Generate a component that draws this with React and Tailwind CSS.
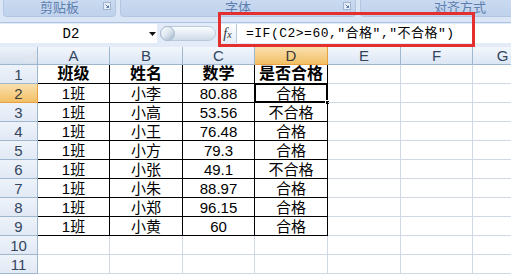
import React from 'react';

const COLS = [
  { k: 'A', w: 'w-[72px]' },
  { k: 'B', w: 'w-[73px]' },
  { k: 'C', w: 'w-[72px]' },
  { k: 'D', w: 'w-[73px]' },
  { k: 'E', w: 'w-[73px]' },
  { k: 'F', w: 'w-[72px]' },
  { k: 'G', w: 'w-[60px]' },
];

const ROWS = [
  ['班级', '姓名', '数学', '是否合格'],
  ['1班', '小李', '80.88', '合格'],
  ['1班', '小高', '53.56', '不合格'],
  ['1班', '小王', '76.48', '合格'],
  ['1班', '小方', '79.3', '合格'],
  ['1班', '小张', '49.1', '不合格'],
  ['1班', '小朱', '88.97', '合格'],
  ['1班', '小郑', '96.15', '合格'],
  ['1班', '小黄', '60', '合格'],
  [],
  [],
];

function Launcher() {
  return (
    <svg width="8" height="8" viewBox="0 0 8 8" className="shrink-0">
      <rect x="0.5" y="0.5" width="7" height="7" fill="#e8eff8" stroke="#9db3d0" />
      <path d="M2.5 2.5 L5.5 5.5 M5.5 3.5 V5.5 H3.5" stroke="#5b7aa6" strokeWidth="1" fill="none" />
    </svg>
  );
}

function RibbonGroup({ label, width, launcher }) {
  return (
    <div className={`${width} h-[17px] shrink-0 rounded-b-[4px] border-x border-b border-[#b3c7e1] bg-gradient-to-b from-[#c9daf0] to-[#bfd2ec] flex items-start relative`}>
      <div className="flex-1 text-center text-[13px] leading-none text-[#5d7fb0] mt-[1px]">{label}</div>
      {launcher && (
        <div className="absolute right-[4px] top-[2px]">
          <Launcher />
        </div>
      )}
    </div>
  );
}

function ColHeader({ col }) {
  const on = col.k === 'D';
  return (
    <div
      className={`${col.w} h-full shrink-0 border-r border-b flex items-center justify-center text-[15px] leading-none ${
        on
          ? 'bg-gradient-to-b from-[#fae0ad] to-[#f2c064] border-[#e9a040] text-[#3b3b3b]'
          : 'bg-gradient-to-b from-[#f3f7fc] to-[#dbe6f4] border-[#9eb6ce] text-[#33455f]'
      }`}
    >
      {col.k}
    </div>
  );
}

export default function App() {
  return (
    <div className="w-[511px] h-[275px] overflow-hidden relative bg-white font-['Liberation_Sans','Noto_Sans_CJK_SC',sans-serif]">
      {/* ribbon group labels */}
      <div className="h-[23px] bg-[#dae6f5] flex items-start gap-[4px] pl-[3px] border-b border-[#aec3df]">
        <RibbonGroup label="剪贴板" width="w-[113px]" launcher />
        <RibbonGroup label="字体" width="w-[236px]" launcher />
        <RibbonGroup label="对齐方式" width="w-[200px]" />
      </div>

      {/* formula bar */}
      <div className="h-[24px] bg-[#e2ebf7] flex items-start pt-[1px]">
        <div className="w-[157px] h-[19px] bg-white flex items-center relative">
          <div className="w-[142px] text-center text-[14px] leading-none font-['Liberation_Mono',monospace] text-black">D2</div>
          <svg width="7" height="4" viewBox="0 0 7 4" className="absolute left-[149px] top-[8px]">
            <path d="M0 0 H7 L3.5 4 Z" fill="#111" />
          </svg>
        </div>
        <div className="w-[61px] h-[19px] flex items-center pl-[3px]">
          <div className="relative w-[56px] h-[15px] rounded-full bg-gradient-to-b from-[#fbfdff] to-[#cfdbe9] border border-[#b9c9dc]">
            <div className="absolute -left-[1px] -top-[1px] w-[15px] h-[15px] rounded-full bg-gradient-to-br from-[#ffffff] via-[#dde6f0] to-[#9fb2c8] border border-[#a9bace]" />
          </div>
        </div>
        <div className="w-[19px] h-[19px] bg-gradient-to-b from-[#ffffff] to-[#e6edf6] border-x border-[#b7c8dd] flex items-center justify-center">
          <span className="font-['Liberation_Serif',serif] italic text-[14px] leading-none text-[#333]">
            f<span className="text-[10px]">x</span>
          </span>
        </div>
        <div className="flex-1 h-[19px] bg-white flex items-center pl-[9px]">
          <span className="text-[13px] leading-none text-black font-['Liberation_Mono','Noto_Sans_CJK_SC',monospace] tracking-[0.5px] whitespace-nowrap">
            =IF(C2&gt;=60,"合格","不合格")
          </span>
        </div>
      </div>

      {/* column headers */}
      <div className="h-[18px] flex">
        <div className="w-[38px] h-full shrink-0 border-r border-b border-[#9eb6ce] bg-gradient-to-b from-[#eef3f9] to-[#d3dfee] relative">
          <svg width="13" height="12" viewBox="0 0 13 12" className="absolute right-[1px] bottom-[2px]">
            <path d="M13 0 V12 H0 Z" fill="#dfe6ef" />
          </svg>
        </div>
        {COLS.map((c) => (
          <ColHeader key={c.k} col={c} />
        ))}
      </div>

      {/* grid rows */}
      {ROWS.map((r, ri) => {
        const active = ri === 1;
        return (
          <div key={ri} className="h-[19px] flex">
            <div
              className={`w-[38px] h-full shrink-0 border-r border-b flex items-center justify-center text-[15px] leading-none ${
                active
                  ? 'bg-gradient-to-b from-[#fae0ad] to-[#f2c064] border-[#e9a040] text-[#3b3b3b]'
                  : 'bg-gradient-to-b from-[#eef3fa] to-[#e1e9f5] border-[#9eb6ce] text-[#33455f]'
              }`}
            >
              {ri + 1}
            </div>
            {COLS.map((c, ci) => {
              const inTable = ri < 9 && ci < 4;
              const val = r[ci] || '';
              const isHead = ri === 0;
              const isActive = ri === 1 && ci === 3;
              return (
                <div
                  key={c.k}
                  className={`${c.w} h-full shrink-0 border-r border-b relative flex items-center justify-center leading-none text-black ${
                    inTable ? 'border-black' : 'border-[#d0d7e5]'
                  } ${isHead ? 'text-[16px] font-bold' : 'text-[15px]'}`}
                >
                  {val}
                  {isActive && (
                    <>
                      <div className="absolute -left-[1px] -top-[1px] -right-[1px] -bottom-[1px] border-2 border-black" />
                      <div className="absolute -right-[3px] -bottom-[3px] w-[5px] h-[5px] bg-black border border-white" />
                    </>
                  )}
                </div>
              );
            })}
          </div>
        );
      })}

      {/* red highlight around formula */}
      <div className="absolute left-[218px] top-[12px] w-[257px] h-[35px] border-[3px] border-[#e3302f]" />
    </div>
  );
}
